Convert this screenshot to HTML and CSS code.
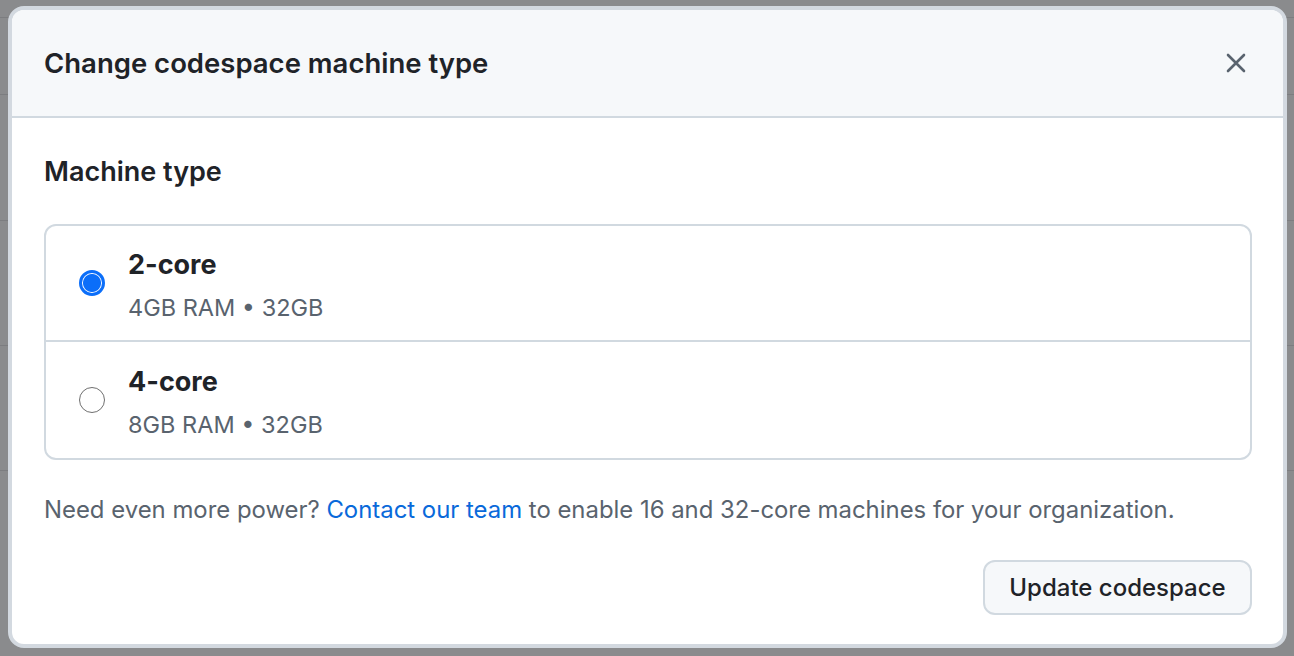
FILE: index.html
```html
<!DOCTYPE html>
<html>
<head>
<meta charset="utf-8">
<link rel="stylesheet" href="styles.css">
</head>
<body>
<div class="backdrop">
  <div class="bg-lines">
    <div class="bg-row r1"></div>
    <div class="bg-row r2"></div>
    <div class="bg-row r3"></div>
    <div class="bg-row r4"></div>
    <div class="bg-row r5"></div>
  </div>
  <div class="dialog">
    <header class="dialog-header">
      <h1 class="dialog-title">Change codespace machine type</h1>
      <button class="close-btn" aria-label="Close">
        <svg width="22" height="22" viewBox="0 0 22 22"><path d="M3 3L19 19M19 3L3 19" stroke="#59636e" stroke-width="2.6" stroke-linecap="round"/></svg>
      </button>
    </header>
    <div class="dialog-body">
      <h2 class="section-title">Machine type</h2>
      <div class="options">
        <label class="option">
          <span class="radio checked"></span>
          <span class="option-text">
            <span class="option-name">2-core</span>
            <span class="option-desc">4GB RAM • 32GB</span>
          </span>
        </label>
        <label class="option">
          <span class="radio"></span>
          <span class="option-text">
            <span class="option-name">4-core</span>
            <span class="option-desc">8GB RAM • 32GB</span>
          </span>
        </label>
      </div>
      <p class="note">Need even more power? <a class="link" href="#">Contact our team</a> to enable 16 and 32-core machines for your organization.</p>
      <div class="footer">
        <button class="btn">Update codespace</button>
      </div>
    </div>
  </div>
</div>
</body>
</html>
```
FILE: styles.css
```css
* { box-sizing: border-box; }
html, body { margin: 0; padding: 0; }
body {
  width: 1294px;
  height: 656px;
  overflow: hidden;
  background: #8a8b8d;
  font-family: Inter, "Noto Sans", sans-serif;
  color: #1f2328;
}
.backdrop {
  position: relative;
  width: 1294px;
  height: 656px;
  padding: 6px 7px 8px 8px;
}
.bg-lines { position: absolute; inset: 0; }
.bg-row { position: absolute; left: 0; right: 0; height: 1px; background: #7c7d80; }
.r1 { top: 17px; }
.r2 { top: 94px; }
.r3 { top: 220px; }
.r4 { top: 345px; }
.r5 { top: 470px; }
.dialog {
  position: relative;
  height: 642px;
  border: 4px solid #d3d9e0;
  border-radius: 16px;
  background: #ffffff;
  overflow: hidden;
  display: flex;
  flex-direction: column;
}
.dialog-header {
  height: 108px;
  flex: none;
  background: #f6f8fa;
  border-bottom: 2px solid #d1d9e0;
  display: flex;
  align-items: center;
  justify-content: space-between;
  padding: 0 36px 0 32px;
}
.dialog-title {
  margin: 0;
  font-size: 27.5px;
  font-weight: 600;
  letter-spacing: 0;
}
.close-btn {
  border: 0;
  background: transparent;
  padding: 0;
  width: 22px;
  height: 22px;
  display: flex;
}
.dialog-body {
  padding: 38px 31px 0 32px;
  display: flex;
  flex-direction: column;
}
.section-title {
  margin: 0;
  font-size: 27px;
  font-weight: 600;
  line-height: 32px;
}
.options {
  margin-top: 36px;
  border: 2px solid #d1d9e0;
  border-radius: 12px;
  display: flex;
  flex-direction: column;
}
.option {
  height: 114px;
  display: flex;
  align-items: center;
  padding-left: 33px;
  gap: 23px;
}
.option + .option { border-top: 2px solid #d1d9e0; height: 118px; }
.radio {
  width: 26px;
  height: 26px;
  border-radius: 50%;
  border: 1.8px solid #6f6f6f;
  flex: none;
  margin-top: 0;
}
.radio.checked {
  border: 3px solid #0b6ef9;
  background: radial-gradient(circle, #0b6ef9 0 8.5px, #ffffff 9.5px);
}
.option-text { display: flex; flex-direction: column; gap: 14px; margin-top: 6px; }
.option-name { font-size: 27px; font-weight: 700; line-height: 30px; }
.option-desc { font-size: 23.5px; color: #59636e; line-height: 28px; }
.note {
  margin: 36px 0 0;
  font-size: 23.9px;
  line-height: 28px;
  color: #59636e;
}
.link { color: #0969da; text-decoration: none; }
.footer {
  display: flex;
  justify-content: flex-end;
  margin-top: 36px;
}
.btn {
  width: 269px;
  height: 55px;
  border: 2px solid #d1d9e0;
  border-radius: 12px;
  background: #f6f8fa;
  font-family: inherit;
  font-size: 24px;
  font-weight: 500;
  color: #1f2328;
}
```
